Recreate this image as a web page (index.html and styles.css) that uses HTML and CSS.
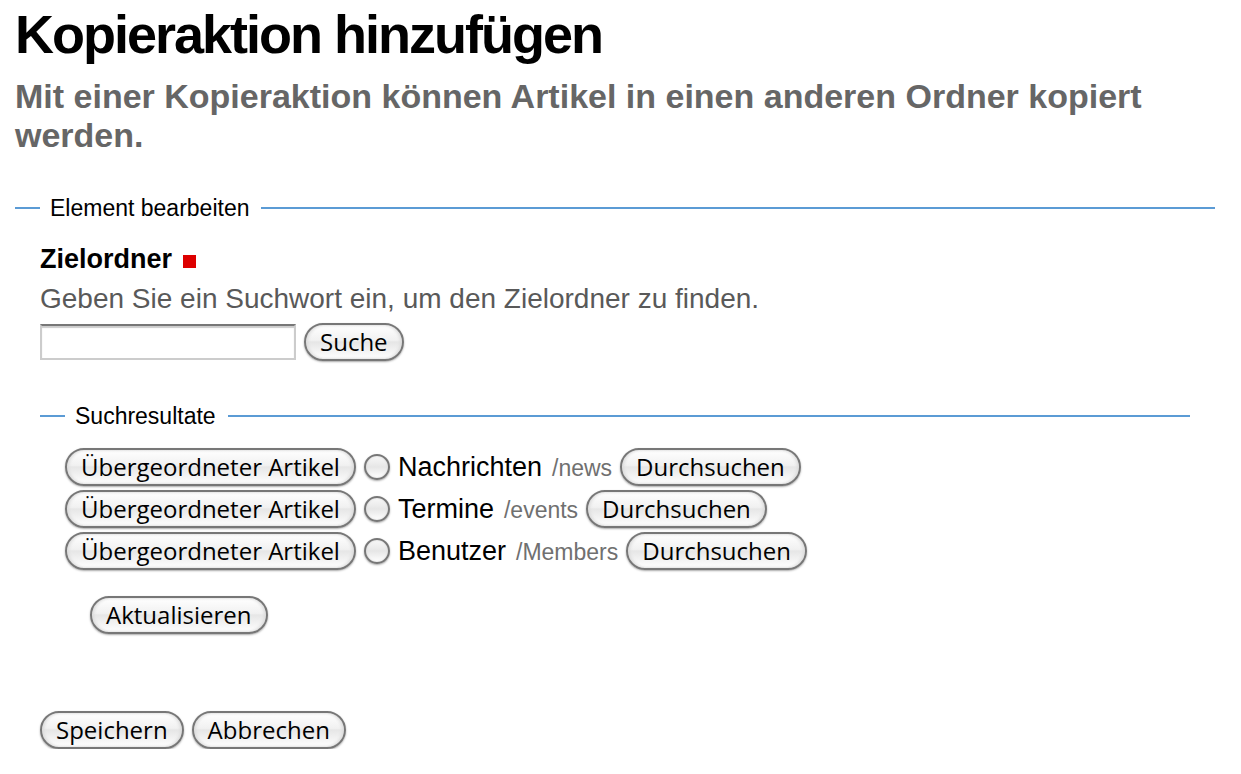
FILE: index.html
```html
<!DOCTYPE html>
<html lang="de">
<head>
<meta charset="utf-8">
<title>Kopieraktion hinzufügen</title>
<link rel="stylesheet" href="styles.css">
</head>
<body>
<main class="page">
  <h1 class="title">Kopieraktion hinzufügen</h1>
  <p class="lead">Mit einer Kopieraktion können Artikel in einen anderen Ordner kopiert werden.</p>
  <form class="form">
    <fieldset class="group">
      <legend class="legend">Element bearbeiten</legend>
      <label class="label" for="target">Zielordner <span class="required"></span></label>
      <p class="help" id="target-help">Geben Sie ein Suchwort ein, um den Zielordner zu finden.</p>
      <div class="row search">
        <input class="field" id="target" type="text" aria-describedby="target-help">
        <button class="button" type="button">Suche</button>
      </div>
      <fieldset class="group results">
        <legend class="legend">Suchresultate</legend>
        <div class="list">
          <div class="row result">
            <button class="button" type="button">Übergeordneter Artikel</button>
            <input class="radio" type="radio" name="folder" id="news">
            <label class="name" for="news">Nachrichten <span class="path">/news</span></label>
            <button class="button" type="button">Durchsuchen</button>
          </div>
          <div class="row result">
            <button class="button" type="button">Übergeordneter Artikel</button>
            <input class="radio" type="radio" name="folder" id="events">
            <label class="name" for="events">Termine <span class="path">/events</span></label>
            <button class="button" type="button">Durchsuchen</button>
          </div>
          <div class="row result">
            <button class="button" type="button">Übergeordneter Artikel</button>
            <input class="radio" type="radio" name="folder" id="members">
            <label class="name" for="members">Benutzer <span class="path">/Members</span></label>
            <button class="button" type="button">Durchsuchen</button>
          </div>
        </div>
        <div class="row refresh">
          <button class="button" type="button">Aktualisieren</button>
        </div>
      </fieldset>
      <div class="row actions">
        <button class="button" type="submit">Speichern</button>
        <button class="button" type="button">Abbrechen</button>
      </div>
    </fieldset>
  </form>
</main>
</body>
</html>
```
FILE: styles.css
```css
* { box-sizing: border-box; }
body { margin: 0; background: #fff; color: #000; font-family: "Liberation Sans", Arial, sans-serif; }
.page { padding: 3px 26px 0 15px; }
.title { margin: 0; font-size: 54px; line-height: 62px; letter-spacing: -2px; }
.lead { margin: 12px 0 0; color: #666; font-size: 34px; line-height: 39px; font-weight: bold; }
.form { margin-top: 38px; }
.group { margin: 0; padding: 0 25px; border: 0 solid #5b9bd5; border-top-width: 2px; min-width: 0; }
.legend { padding: 0 12px 0 10px; font-size: 23px; line-height: 30px; }
.label { display: flex; align-items: center; gap: 11px; margin-top: 19px; font-size: 27px; line-height: 34px; font-weight: bold; }
.required { width: 13px; height: 13px; margin-top: 5px; background: #d00; }
.help { margin: 6px 0 0; color: #595959; font-size: 28px; line-height: 34px; }
.row { display: flex; align-items: center; gap: 8px; }
.search { margin-top: 7px; }
.field { width: 256px; height: 36px; border: 2px solid #ccc; border-top-color: #777; background: #fff; box-shadow: inset 0 2px 1px #ccc; font: 24px "Liberation Sans", Arial, sans-serif; }
.button { height: 38px; padding: 0 14px; border: 2px solid #777; border-radius: 19px; background: linear-gradient(#fff, #f1f1f1 45%, #e6e6e6 50%, #fff); box-shadow: 0 1px 2px #aaa, inset 2px 0 3px #ddd, inset -2px 0 3px #ddd; color: #000; font: 24px/34px "Open Sans", sans-serif; white-space: nowrap; }
.results { margin-top: 40px; }
.list { padding-top: 15px; }
.result { height: 42px; }
.radio { appearance: none; width: 26px; height: 26px; margin: 0; border: 2px solid #777; border-radius: 50%; background: linear-gradient(#f8f8f8, #e6e6e6 50%, #fff); box-shadow: 0 1px 2px #aaa, inset 0 0 2px #ccc; }
.name { display: flex; align-items: baseline; gap: 10px; font-size: 27px; line-height: 34px; }
.path { color: #707070; font-size: 23px; }
.refresh { margin: 24px 0 0 25px; }
.actions { margin-top: 77px; }
```
